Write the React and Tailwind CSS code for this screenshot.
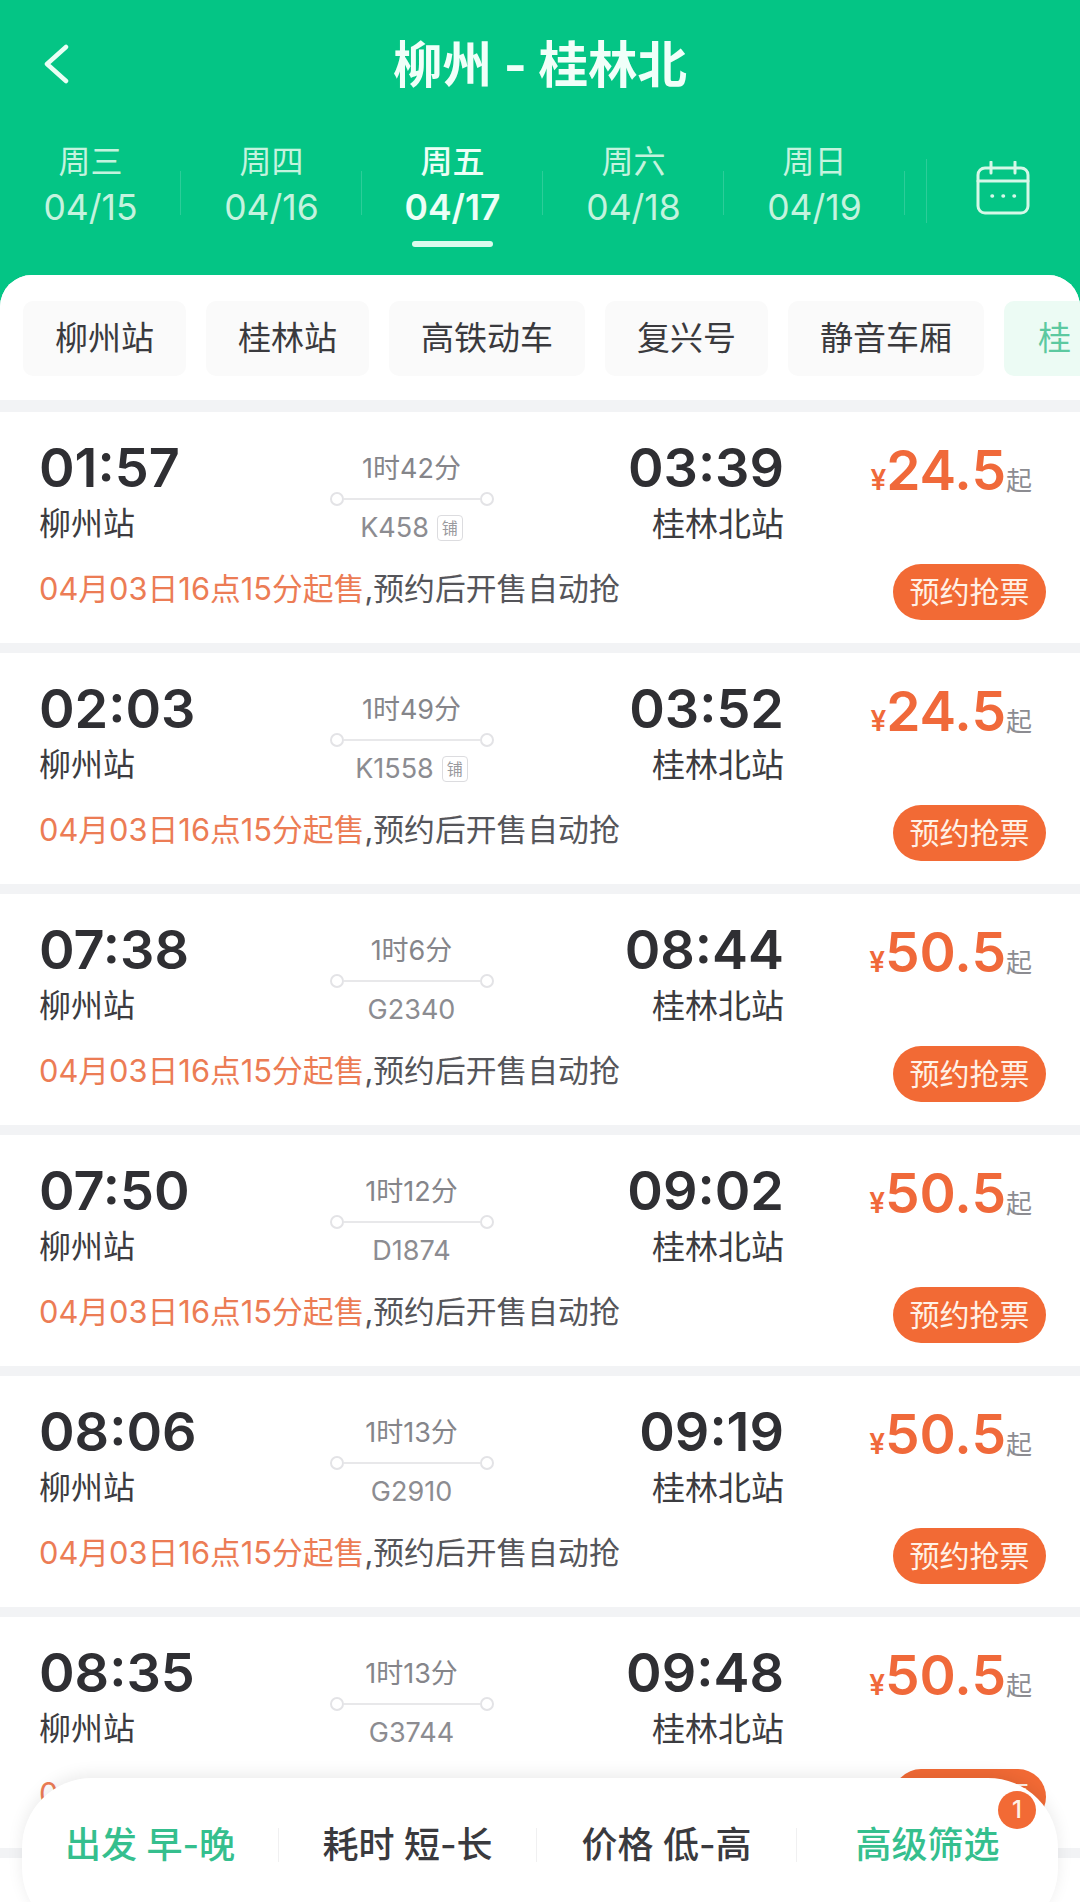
import React from 'react';

const days = [
  { week: '周三', date: '04/15' },
  { week: '周四', date: '04/16' },
  { week: '周五', date: '04/17', active: true },
  { week: '周六', date: '04/18' },
  { week: '周日', date: '04/19' },
];

const chips = ['柳州站', '桂林站', '高铁动车', '复兴号', '静音车厢'];

const trains = [
  { from: '01:57', to: '03:39', dur: '1时42分', no: 'K458', price: '24.5', bed: true },
  { from: '02:03', to: '03:52', dur: '1时49分', no: 'K1558', price: '24.5', bed: true },
  { from: '07:38', to: '08:44', dur: '1时6分', no: 'G2340', price: '50.5' },
  { from: '07:50', to: '09:02', dur: '1时12分', no: 'D1874', price: '50.5' },
  { from: '08:06', to: '09:19', dur: '1时13分', no: 'G2910', price: '50.5' },
  { from: '08:35', to: '09:48', dur: '1时13分', no: 'G3744', price: '50.5' },
  { from: '08:40', to: '09:55', dur: '1时15分', no: 'G2912', price: '50.5' },
];

const TrainCard = ({ t }) => (
  <div className="h-[231px] bg-white pl-[39px] pr-[34px] pt-[26px]">
    <div className="grid grid-cols-[250px_245px_250px_1fr]">
      <div>
        <div className="text-[54px] leading-[60px] font-semibold text-[#2f2f33]">{t.from}</div>
        <div className="mt-[6px] text-[32px] leading-[40px] text-[#3c3c40]">柳州站</div>
      </div>

      <div className="flex flex-col items-center">
        <div className="h-[60px] pt-[1px] text-[27px] leading-[60px] text-[#85858a]">{t.dur}</div>
        <div className="flex w-[164px] items-center -mt-[6px]">
          <span className="h-[14px] w-[14px] rounded-full border-2 border-[#e3e3e6]" />
          <span className="h-[2px] flex-1 bg-[#e8e8ea]" />
          <span className="h-[14px] w-[14px] rounded-full border-2 border-[#e3e3e6]" />
        </div>
        <div className="mt-[4px] flex items-center gap-[8px] text-[27px] leading-[36px] text-[#8c8c91]">
          <span>{t.no}</span>
          {t.bed && (
            <span className="flex h-[26px] w-[26px] items-center justify-center rounded-[4px] border border-[#dcdcdf] text-[16px] leading-none text-[#9a9a9e]">铺</span>
          )}
        </div>
      </div>

      <div className="text-right">
        <div className="text-[54px] leading-[60px] font-semibold text-[#2f2f33]">{t.to}</div>
        <div className="mt-[6px] text-[33px] leading-[40px] text-[#3c3c40]">桂林北站</div>
      </div>

      <div className="flex h-[60px] items-center justify-end pr-[14px] pt-[4px]">
        <span className="mt-[20px] text-[28px] font-semibold text-[#f0693a]">¥</span>
        <span className="text-[55px] leading-[60px] font-semibold text-[#f0693a]">{t.price}</span>
        <span className="mt-[20px] text-[26px] text-[#8c8c91]">起</span>
      </div>
    </div>

    <div className="mt-[18px] flex items-center justify-between">
      <div className="-mt-[6px] text-[30.8px] leading-[40px] whitespace-nowrap text-[#55555a]">
        <span className="text-[#ec7c55]">04月03日16点15分起售</span>,预约后开售自动抢
      </div>
      <button className="h-[56px] w-[153px] rounded-full bg-[#f26a35] text-[30px] leading-none text-[#fff1e6]">预约抢票</button>
    </div>
  </div>
);

export default function App() {
  return (
    <div className="relative h-[1902px] w-[1080px] overflow-hidden bg-[#04c585] font-['Inter','Noto_Sans_CJK_SC',sans-serif]">
      {/* Header */}
      <header className="h-[275px] text-white">
        <div className="relative flex h-[130px] items-center justify-center">
          <svg className="absolute left-[42px] top-[44px]" width="28" height="40" viewBox="0 0 28 40" fill="none">
            <polyline points="24,3 5,20 24,37" stroke="#eafff5" strokeWidth="4.5" strokeLinecap="round" strokeLinejoin="round" />
          </svg>
          <h1 className="text-[49.5px] font-bold text-[#f0fff9]">柳州 - 桂林北</h1>
        </div>

        <div className="mt-[11px] flex h-[115px] items-start">
          {days.map((d) => (
            <div key={d.date} className="relative flex w-[181px] flex-col items-center">
              <div className={`text-[32px] leading-[42px] ${d.active ? 'font-medium text-[#ecfff6]' : 'text-[#c4f3de]'}`}>{d.week}</div>
              <div className={`mt-[4px] text-[35.5px] leading-[42px] ${d.active ? 'font-semibold text-[#ecfff6]' : 'text-[#c4f3de]'}`}>{d.date}</div>
              {d.active && <div className="mt-[12px] h-[6px] w-[81px] rounded-full bg-[#dcfbed]" />}
              <span className="absolute right-0 top-[30px] h-[44px] w-px bg-[#2ccd99]" />
            </div>
          ))}
          <span className="mt-[18px] ml-[21px] h-[64px] w-px bg-[#2ccd99]" />
          <svg className="ml-[49px] mt-[20px]" width="54" height="54" viewBox="0 0 54 54" fill="none" stroke="#d6f8e8" strokeWidth="3">
            <rect x="2" y="7" width="50" height="45" rx="7" />
            <path d="M2 20h50M15 1v11M39 1v11" strokeLinecap="round" />
            <path d="M16 35h.5M27 35h.5M38 35h.5" strokeLinecap="round" strokeWidth="3.5" />
          </svg>
        </div>
      </header>

      {/* List panel */}
      <div className="h-full rounded-t-[32px] bg-[#f2f3f5]">
        <div className="flex h-[125px] items-start gap-[20px] overflow-hidden rounded-t-[32px] bg-white pl-[23px] pt-[26px]">
          {chips.map((c) => (
            <span key={c} className="flex h-[75px] shrink-0 items-center rounded-[10px] bg-[#fafafa] px-[32px] text-[33px] text-[#3a3a3e]">{c}</span>
          ))}
          <span className="flex h-[75px] w-[90px] shrink-0 items-center rounded-[10px] bg-[#ecfbf4] pl-[34px] text-[33px] text-[#5cc9a0]">桂</span>
        </div>

        <div className="mt-[12px] flex flex-col gap-[10px]">
          {trains.map((t) => (
            <TrainCard key={t.no} t={t} />
          ))}
        </div>
      </div>

      {/* Sort bar */}
      <div className="absolute left-[22px] top-[1778px] flex h-[160px] w-[1036px] items-start rounded-[70px] bg-white pt-[50px] shadow-[0_-4px_16px_rgba(0,0,0,0.08)]">
        <div className="flex h-[34px] w-[257px] items-center justify-center border-r border-[#f0f0f1] text-[36px] font-medium text-[#35bf8e]">出发 早-晚</div>
        <div className="flex h-[34px] w-[258px] items-center justify-center border-r border-[#f0f0f1] text-[36px] font-medium text-[#3a3a3e]">耗时 短-长</div>
        <div className="flex h-[34px] w-[260px] items-center justify-center border-r border-[#f0f0f1] text-[36px] font-medium text-[#3a3a3e]">价格 低-高</div>
        <div className="relative flex h-[34px] w-[261px] items-center justify-center text-[36px] font-medium text-[#35bf8e]">
          高级筛选
          <span className="absolute right-[22px] -top-[37px] flex h-[38px] w-[38px] items-center justify-center rounded-full bg-[#f26a35] text-[24px] text-[#fff1e6]">1</span>
        </div>
      </div>
    </div>
  );
}
